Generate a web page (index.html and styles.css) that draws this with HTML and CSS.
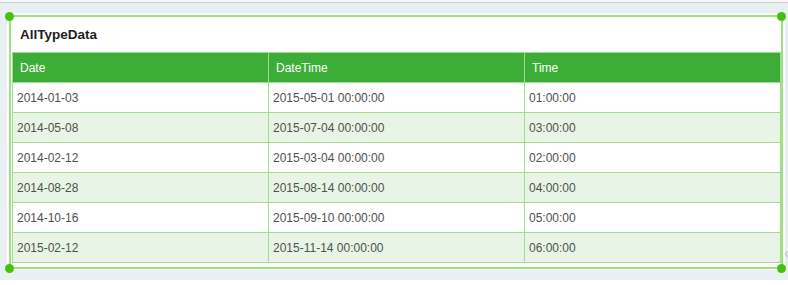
FILE: index.html
```html
<!DOCTYPE html>
<html>
<head>
<meta charset="utf-8">
<link rel="stylesheet" href="styles.css">
</head>
<body>
<div class="topbar"></div>
<div class="stage">
  <div class="widget">
    <div class="title">AllTypeData</div>
    <div class="grid">
      <div class="cell head">Date</div>
      <div class="cell head">DateTime</div>
      <div class="cell head">Time</div>

      <div class="cell">2014-01-03</div>
      <div class="cell">2015-05-01 00:00:00</div>
      <div class="cell">01:00:00</div>

      <div class="cell alt">2014-05-08</div>
      <div class="cell alt">2015-07-04 00:00:00</div>
      <div class="cell alt">03:00:00</div>

      <div class="cell">2014-02-12</div>
      <div class="cell">2015-03-04 00:00:00</div>
      <div class="cell">02:00:00</div>

      <div class="cell alt">2014-08-28</div>
      <div class="cell alt">2015-08-14 00:00:00</div>
      <div class="cell alt">04:00:00</div>

      <div class="cell">2014-10-16</div>
      <div class="cell">2015-09-10 00:00:00</div>
      <div class="cell">05:00:00</div>

      <div class="cell alt">2015-02-12</div>
      <div class="cell alt">2015-11-14 00:00:00</div>
      <div class="cell alt">06:00:00</div>
    </div>
    <div class="outline"></div>
    <span class="dot dot-tl"></span>
    <span class="dot dot-tr"></span>
    <span class="dot dot-bl"></span>
    <span class="dot dot-br"></span>
  </div>
  <svg class="handle" width="6" height="10" viewBox="0 0 6 10"><path d="M5 1 L1.5 5 L5 9" fill="none" stroke="#c4c4c4" stroke-width="1.2"/></svg>
</div>
<div class="footer"></div>
</body>
</html>
```

FILE: styles.css
```css
html, body {
  margin: 0;
  padding: 0;
}
body {
  width: 788px;
  height: 285px;
  overflow: hidden;
  background: #ffffff;
  font-family: "Liberation Sans", Arial, sans-serif;
}
.topbar {
  height: 2px;
  background: #f6f6f6;
  border-bottom: 1px solid #cfcfcf;
}
.stage {
  position: relative;
  height: 277px;
  box-sizing: border-box;
  padding: 10px 0 0 7px;
  background: #e9f0f4;
}
.widget {
  position: relative;
  width: 778px;
  height: 257px;
  background: #ffffff;
}
.title {
  padding: 14px 0 9px 13px;
  font-size: 13.5px;
  line-height: 16px;
  font-weight: bold;
  color: #1e1e1e;
}
.grid {
  margin-left: 5px;
  width: 769px;
  display: grid;
  grid-template-columns: 256px 256px 256px;
  border-left: 1px solid #a6d992;
  border-top: 1px solid #a6d992;
}
.cell {
  height: 30px;
  box-sizing: border-box;
  border-right: 1px solid #a6d992;
  border-bottom: 1px solid #a6d992;
  padding-left: 4px;
  display: flex;
  align-items: center;
  font-size: 12px;
  color: #505050;
  background: #ffffff;
  white-space: nowrap;
}
.cell.alt {
  background: #e8f5e6;
}
.cell.head {
  background: #3cae37;
  color: #ffffff;
  padding-left: 7px;
}
.outline {
  position: absolute;
  left: 2px;
  top: 2px;
  width: 774px;
  height: 254px;
  box-sizing: border-box;
  border: 2px solid #9fe07f;
  pointer-events: none;
}
.dot {
  position: absolute;
  width: 9px;
  height: 9px;
  border-radius: 50%;
  background: #43c10b;
}
.dot-tl { left: -2px; top: -1px; }
.dot-tr { left: 770px; top: -1px; }
.dot-bl { left: -2px; top: 251px; }
.dot-br { left: 770px; top: 251px; }
.handle {
  position: absolute;
  left: 784px;
  top: 246px;
}
.footer {
  height: 5px;
  background: #ffffff;
}
```
